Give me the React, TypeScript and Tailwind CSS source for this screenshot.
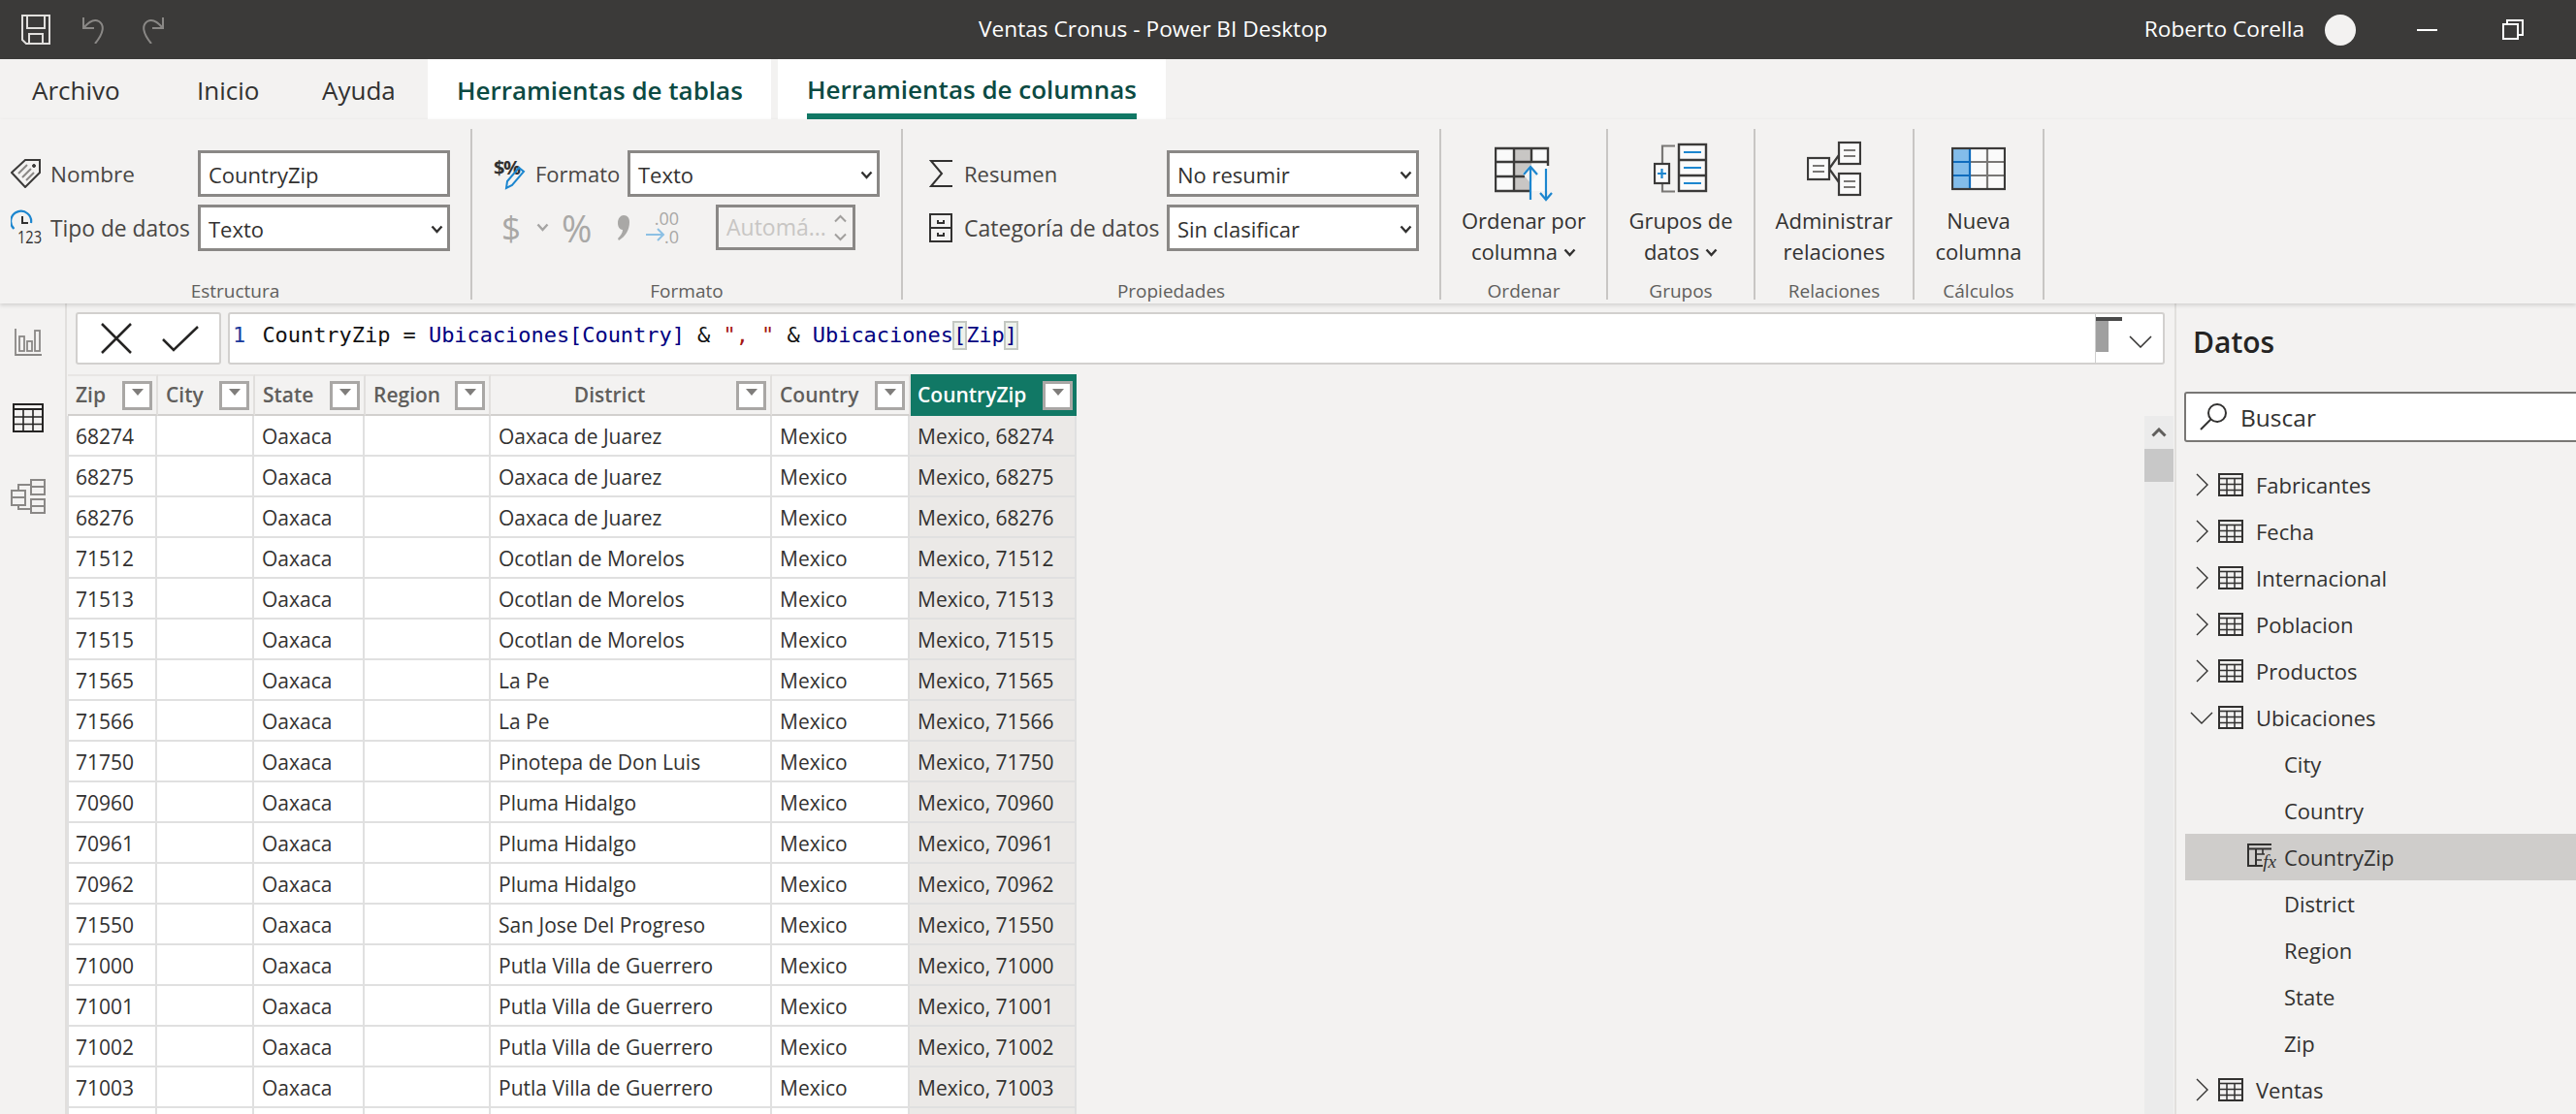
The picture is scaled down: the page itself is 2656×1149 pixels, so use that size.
type IconProps = { className?: string };

const BLUE = '#1c86cf';

const COL_WIDTHS = ['w-[91px]', 'w-[100px]', 'w-[114px]', 'w-[130px]', 'w-[290px]', 'w-[142px]', 'w-[172px]'];
const HEAD_WIDTHS = ['w-[93px]', 'w-[100px]', 'w-[114px]', 'w-[129px]', 'w-[290px]', 'w-[143px]', 'w-[171px]'];
const HEADERS = ['Zip', 'City', 'State', 'Region', 'District', 'Country', 'CountryZip'];

const ROWS: [string, string][] = [
  ['68274', 'Oaxaca de Juarez'],
  ['68275', 'Oaxaca de Juarez'],
  ['68276', 'Oaxaca de Juarez'],
  ['71512', 'Ocotlan de Morelos'],
  ['71513', 'Ocotlan de Morelos'],
  ['71515', 'Ocotlan de Morelos'],
  ['71565', 'La Pe'],
  ['71566', 'La Pe'],
  ['71750', 'Pinotepa de Don Luis'],
  ['70960', 'Pluma Hidalgo'],
  ['70961', 'Pluma Hidalgo'],
  ['70962', 'Pluma Hidalgo'],
  ['71550', 'San Jose Del Progreso'],
  ['71000', 'Putla Villa de Guerrero'],
  ['71001', 'Putla Villa de Guerrero'],
  ['71002', 'Putla Villa de Guerrero'],
  ['71003', 'Putla Villa de Guerrero'],
];

function SmallChevron({ className = '' }: IconProps) {
  return (
    <svg className={className} width="13" height="9" viewBox="0 0 13 9" fill="none" stroke="#323130" strokeWidth="2.4">
      <path d="M1.5 1.5 6.5 7l5-5.5" />
    </svg>
  );
}

function TableIcon() {
  return (
    <svg width="26" height="24" viewBox="0 0 26 24" fill="none" stroke="#323130" className="shrink-0">
      <rect x="1" y="1" width="24" height="22" strokeWidth="2" />
      <path d="M1 5.5h24" strokeWidth="1.6" />
      <path d="M1 11.5h24M1 17.5h24M9 5.5V23M17 5.5V23" strokeWidth="1.5" />
    </svg>
  );
}

function Chevron({ open }: { open?: boolean }) {
  if (open) {
    return (
      <svg width="24" height="13" viewBox="0 0 24 13" fill="none" stroke="#323130" strokeWidth="1.4">
        <path d="M1 1l11 11L23 1" />
      </svg>
    );
  }
  return (
    <svg width="13" height="24" viewBox="0 0 13 24" fill="none" stroke="#323130" strokeWidth="1.4">
      <path d="M1 1l11 11L1 23" />
    </svg>
  );
}

function FieldSelect({ value }: { value: string }) {
  return (
    <div className="w-[260px] h-[48px] flex items-center justify-between bg-white border-[3px] border-[#8a8886] pl-[8px] pr-[4px] text-[22px] text-[#323130] shrink-0">
      <span className="pt-[2px]">{value}</span>
      <SmallChevron className="mt-[2px]" />
    </div>
  );
}

function GroupLabel({ text }: { text: string }) {
  return <div className="h-[18px] leading-[18px] text-center text-[19px] text-[#605e5c] whitespace-nowrap">{text}</div>;
}

function BigButton({ width, lines, label, caret, icon }: { width: string; lines: [string, string]; label: string; caret?: boolean; icon: React.ReactNode }) {
  return (
    <div className={`${width} h-[176px] flex flex-col items-center border-r-2 border-[#c8c6c4] shrink-0`}>
      <div className="h-[78px] shrink-0">{icon}</div>
      <div className="flex-1 text-center text-[22px] leading-[32px] text-[#323130] whitespace-nowrap">
        <div>{lines[0]}</div>
        <div className="flex items-center justify-center gap-[6px]">
          {lines[1]}
          {caret && <SmallChevron className="mt-[3px]" />}
        </div>
      </div>
      <GroupLabel text={label} />
    </div>
  );
}

function OrdenarIcon() {
  return (
    <svg width="60" height="79" viewBox="0 0 60 79" fill="none">
      <rect x="1" y="20" width="54" height="44" fill="#fafafa" />
      <rect x="20" y="20" width="18" height="44" fill="#c8c6c4" />
      <path d="M38 64H1V20h54v18M1 34h54M1 49h30M20 20v44M38 20v14" stroke="#3b3a39" strokeWidth="2.4" />
      <path d="M29 46l8-9 8 9-8 10z" fill="#f3f2f1" />
      <path d="M37 73V39M30 47l7-8 7 8" stroke={BLUE} strokeWidth="2.2" />
      <path d="M53 73V41M47 66l6 7 6-7" stroke={BLUE} strokeWidth="2.2" />
    </svg>
  );
}

function GruposIcon() {
  return (
    <svg width="56" height="79" viewBox="0 0 56 79" fill="none">
      <path d="M22 17.5H9v18M9 50v14.5h13" stroke="#797775" strokeWidth="2.2" />
      <rect x="1" y="36" width="15" height="20" fill="#fafafa" stroke="#3b3a39" strokeWidth="2.2" />
      <path d="M8.5 41v10M4 46h9" stroke={BLUE} strokeWidth="2.2" />
      <rect x="26" y="16" width="28" height="48" fill="#fafafa" stroke="#3b3a39" strokeWidth="2.4" />
      <path d="M26 32h28M26 48h28" stroke="#3b3a39" strokeWidth="2.4" />
      <path d="M31 24h18M31 40h18M31 56h18" stroke={BLUE} strokeWidth="2.2" />
    </svg>
  );
}

function RelacionesIcon() {
  return (
    <svg width="56" height="79" viewBox="0 0 56 79" fill="none">
      <rect x="1" y="30" width="22" height="22" fill="#fafafa" stroke="#3b3a39" strokeWidth="2.2" />
      <rect x="33" y="14" width="22" height="22" fill="#fafafa" stroke="#3b3a39" strokeWidth="2.2" />
      <rect x="33" y="46" width="22" height="22" fill="#fafafa" stroke="#3b3a39" strokeWidth="2.2" />
      <path d="M23 41l10-14M23 41l10 14" stroke="#3b3a39" strokeWidth="2.2" />
      <path d="M6 38h12M6 44h12M38 22h12M38 28h12M38 54h12M38 60h12" stroke="#797775" strokeWidth="2.2" />
    </svg>
  );
}

function NuevaIcon() {
  return (
    <svg width="56" height="79" viewBox="0 0 56 79" fill="none">
      <rect x="1" y="20" width="54" height="42" fill="#fafafa" />
      <rect x="1" y="20" width="18" height="42" fill="#83bdea" />
      <path d="M19 34H37M37 34H55M19 48H55M37 20v42" stroke="#797775" strokeWidth="2.2" />
      <path d="M1 34h18M1 48h18M19 20v42" stroke="#0f6cbd" strokeWidth="2.2" />
      <rect x="1" y="20" width="54" height="42" stroke="#3b3a39" strokeWidth="2.2" />
    </svg>
  );
}

function FormulaBar() {
  return (
    <div className="pt-[9px] pl-[9px] pr-[10px] flex gap-[7px] shrink-0">
      <div className="w-[150px] h-[54px] bg-white border-2 border-[#d2d0ce] rounded-[3px] flex items-center shrink-0">
        <svg className="ml-[24px]" width="32" height="32" viewBox="0 0 32 32" fill="none" stroke="#252423" strokeWidth="2.5">
          <path d="M1 1l30 30M31 1 1 31" />
        </svg>
        <svg className="ml-[31px]" width="38" height="27" viewBox="0 0 38 27" fill="none" stroke="#252423" strokeWidth="2.5">
          <path d="M1 14l11 11L37 1" />
        </svg>
      </div>
      <div className="flex-1 h-[54px] bg-white border-2 border-[#d2d0ce] rounded-[3px] flex overflow-hidden">
        <div className="flex-1 pt-[8px] pl-[3px] h-full font-['DejaVu_Sans_Mono',monospace] text-[22px] leading-[28px] tracking-[-0.05px] whitespace-pre text-[#000080]">
          <span className="text-[#1a3a9c]">1</span>
          <span className="text-[#111] ml-[4px]">{' CountryZip = '}</span>
          <span>Ubicaciones[Country]</span>
          <span className="text-[#111]">{' & '}</span>
          <span className="text-[#a31515]">{'", "'}</span>
          <span className="text-[#111]">{' & '}</span>
          <span>Ubicaciones</span>
          <span className="inline-block h-[28px] bg-[#eef2ec] outline outline-2 -outline-offset-1 outline-[#c4c8c2]">[</span>
          <span>Zip</span>
          <span className="inline-block h-[28px] bg-[#eef2ec] outline outline-2 -outline-offset-1 outline-[#c4c8c2]">]</span>
        </div>
        <div className="w-[70px] h-full border-l border-[#cfcfcf] shrink-0 flex items-start pt-[3px]">
          <div className="flex flex-col">
            <div className="w-[27px] h-[4px] bg-[#4a4a4a]" />
            <div className="w-[13px] h-[32px] bg-[#a0a0a0]" />
          </div>
          <svg className="ml-[7px] mt-[19px]" width="24" height="13" viewBox="0 0 24 13" fill="none" stroke="#323130" strokeWidth="1.5">
            <path d="M1 1l11 11L23 1" />
          </svg>
        </div>
      </div>
    </div>
  );
}

function HeaderCell({ name, index }: { name: string; index: number }) {
  const active = name === 'CountryZip';
  return (
    <div
      className={`${HEAD_WIDTHS[index]} h-full flex items-center shrink-0 pr-[4px] ${
        active ? 'bg-[#117865] text-white pl-[7px]' : 'bg-[#f3f2f1] text-[#605e5c] pl-[8px] border-r-2 border-t-2 border-b-2 border-t-[#e8e6e4] border-b-[#d2d0ce] border-r-[#e1dfdd]'
      }`}
    >
      <span className={`flex-1 text-[21px] font-semibold ${name === 'District' ? 'text-center pr-[16px]' : ''}`}>{name}</span>
      <div className="w-[31px] h-[30px] bg-white border-[3px] border-[#a9a7a5] flex justify-center pt-[5px] shrink-0">
        <div className="w-0 h-0 border-l-[6px] border-r-[6px] border-t-[7px] border-l-transparent border-r-transparent border-t-[#7f7d7b]" />
      </div>
    </div>
  );
}

function DataRow({ zip, district }: { zip?: string; district?: string }) {
  const cells = [zip, '', zip ? 'Oaxaca' : '', '', district, zip ? 'Mexico' : '', zip ? `Mexico, ${zip}` : ''];
  return (
    <div className="h-[42px] flex border-l-2 border-[#e0e0e0]">
      {cells.map((text, i) => (
        <div
          key={i}
          className={`${COL_WIDTHS[i]} h-full shrink-0 border-r-2 border-b-2 border-[#e0e0e0] flex items-center pt-[3px] text-[21px] text-[#323130] whitespace-nowrap ${
            i === 0 ? 'pl-[7px]' : 'pl-[8px]'
          } ${i === 6 ? 'bg-[#ebe9e7]' : 'bg-white'}`}
        >
          {text}
        </div>
      ))}
    </div>
  );
}

function TreeTable({ name, open }: { name: string; open?: boolean }) {
  return (
    <div className="h-[48px] ml-[9px] flex items-center text-[22px] text-[#323130]">
      <div className="w-[34px] flex justify-center">
        <Chevron open={open} />
      </div>
      <TableIcon />
      <span className="ml-[13px]">{name}</span>
    </div>
  );
}

function TreeField({ name, selected }: { name: string; selected?: boolean }) {
  return (
    <div className={`h-[48px] ml-[9px] flex items-center text-[22px] text-[#323130] ${selected ? 'bg-[#cfcdcb]' : ''}`}>
      <div className="w-[102px] flex justify-end pr-[8px] shrink-0">
        {selected && (
          <div className="relative w-[30px] h-[28px]">
            <svg width="26" height="24" viewBox="0 0 26 24" fill="none" stroke="#323130">
              <path d="M25 1H1v22h15M1 5.5h24M9 5.5V23" strokeWidth="2" />
              <path d="M9 11h9M9 17h6M16 5.5V11" strokeWidth="1.6" />
            </svg>
            <span className="absolute right-0 bottom-0 font-['Liberation_Serif',serif] italic text-[19px] leading-[18px]">fx</span>
          </div>
        )}
      </div>
      <span>{name}</span>
    </div>
  );
}

export default function App() {
  return (
    <div className="w-[2656px] h-[1149px] overflow-hidden flex flex-col bg-[#f3f2f1] font-['Open_Sans',sans-serif]">
      {/* barra de titulo */}
      <div className="h-[61px] bg-[#3b3a39] flex items-center shrink-0 text-white">
        <svg className="ml-[22px]" width="30" height="31" viewBox="0 0 30 31" fill="none" stroke="#e1dfdd" strokeWidth="2">
          <path d="M1 1h28v29H5l-4-4z" />
          <path d="M6 1v13h18V1M8 30V20h14v10" />
        </svg>
        <svg className="ml-[32px]" width="26" height="29" viewBox="0 0 26 29" fill="none" stroke="#8a8886" strokeWidth="2">
          <path d="M2 2v11h11M2 13C7 7 13 3 18 6c6 4 5 12-4 23" />
        </svg>
        <svg className="ml-[34px]" width="26" height="29" viewBox="0 0 26 29" fill="none" stroke="#8a8886" strokeWidth="2">
          <path d="M24 2v11H13M24 13C19 7 13 3 8 6c-6 4-5 12 4 23" />
        </svg>
        <span className="ml-[839px] text-[22.7px] whitespace-nowrap">Ventas Cronus - Power BI Desktop</span>
        <span className="ml-auto text-[22.7px] whitespace-nowrap">Roberto Corella</span>
        <div className="ml-[21px] w-[32px] h-[32px] rounded-full bg-[#f3f2f1]" />
        <div className="ml-[63px] w-[21px] h-[2px] bg-white" />
        <svg className="ml-[67px] mr-[54px]" width="22" height="21" viewBox="0 0 22 21" fill="none" stroke="#fff" strokeWidth="2">
          <rect x="1" y="5" width="15" height="15" />
          <path d="M5 5V1h16v15h-5" />
        </svg>
      </div>

      {/* pestañas */}
      <div className="h-[62px] flex shrink-0 text-[26px] text-[#323130]">
        <div className="w-[203px] pl-[33px] pt-[2px] flex items-center">Archivo</div>
        <div className="w-[129px] pt-[2px] flex items-center">Inicio</div>
        <div className="w-[109px] pt-[2px] flex items-center">Ayuda</div>
        <div className="w-[354px] pl-[30px] pt-[2px] bg-white flex items-center font-semibold text-[#0b4a42] whitespace-nowrap">Herramientas de tablas</div>
        <div className="w-[400px] ml-[7px] pl-[30px] bg-white flex font-semibold text-[#0b4a42] whitespace-nowrap">
          <div className="h-full pt-[6px] flex items-center border-b-[6px] border-[#117865]">Herramientas de columnas</div>
        </div>
      </div>

      {/* cinta */}
      <div className="h-[190px] pt-[10px] flex shrink-0 relative z-10 bg-[#f3f2f1] shadow-[0_2px_4px_rgba(0,0,0,0.14)] text-[22px] text-[#484644]">
        <div className="w-[487px] h-[176px] flex flex-col border-r-2 border-[#c8c6c4] shrink-0">
          <div className="flex-1 pt-[22px] flex flex-col gap-[8px] pl-[11px]">
            <div className="h-[48px] flex items-center">
              <svg className="w-[41px] shrink-0" width="41" height="30" viewBox="0 0 41 30" fill="none" stroke="#3b3a39">
                <path d="M1 14 15 1h15v13L15 29z" strokeWidth="2" />
                <circle cx="24" cy="7" r="1.5" fill="#3b3a39" />
                <path d="M8 15l9-9M12 19l9-9M16 22l8-8" stroke="#8a8886" strokeWidth="2" />
              </svg>
              <span className="w-[152px] pt-[1px] shrink-0 text-[22.5px]">Nombre</span>
              <div className="w-[260px] h-[48px] flex items-center bg-white border-[3px] border-[#8a8886] pl-[8px] pt-[2px] text-[#323130]">CountryZip</div>
            </div>
            <div className="h-[48px] flex items-center">
              <svg className="w-[41px] shrink-0" width="41" height="40" viewBox="0 0 41 40" fill="none">
                <path d="M3.5 21A10.5 10.5 0 1 1 21 15" stroke={BLUE} strokeWidth="2.2" />
                <path d="M12 8v7h6" stroke="#323130" strokeWidth="2" />
                <text x="7" y="36" fontSize="18" textLength="25" lengthAdjust="spacingAndGlyphs" fill="#323130" fontFamily="Open Sans">123</text>
              </svg>
              <span className="w-[152px] pt-[3px] shrink-0 whitespace-nowrap text-[22.8px]">Tipo de datos</span>
              <FieldSelect value="Texto" />
            </div>
          </div>
          <GroupLabel text="Estructura" />
        </div>

        <div className="w-[444px] h-[176px] flex flex-col border-r-2 border-[#c8c6c4] shrink-0">
          <div className="flex-1 pt-[22px] flex flex-col gap-[8px] pl-[22px]">
            <div className="flex items-center">
              <div className="relative w-[43px] h-[32px] shrink-0">
                <span className="absolute left-0 -top-[5px] text-[20px] font-bold text-[#323130] tracking-[-1.5px]">$%</span>
                <svg className="absolute left-[11px] top-[7px]" width="22" height="26" viewBox="0 0 22 26" fill="none" stroke={BLUE} strokeWidth="2">
                  <path d="M3 17 15 3l5 4L8 21l-6 3z" />
                </svg>
              </div>
              <span className="w-[95px] shrink-0">Formato</span>
              <FieldSelect value="Texto" />
            </div>
            <div className="flex items-center h-[47px] text-[#a9a8a6]">
              <span className="ml-[8px] w-[20px] shrink-0 text-[35px] leading-none">$</span>
              <SmallChevron className="ml-[16px] opacity-40 shrink-0" />
              <span className="ml-[13px] w-[32px] shrink-0 text-[38px] leading-none">%</span>
              <svg className="ml-[25px] shrink-0" width="14" height="28" viewBox="0 0 14 28" fill="#a9a8a6">
                <path d="M7 1c4 0 6 3 6 7 0 8-4 15-11 19l-1-2c3-3 5-6 5-9-3 0-5-3-5-7 0-5 3-8 6-8z" />
              </svg>
              <div className="relative ml-[16px] w-[34px] h-[38px] text-[18px] leading-[19px] text-right shrink-0">
                <div>.00</div>
                <div>.0</div>
                <svg className="absolute left-0 top-[19px]" width="20" height="14" viewBox="0 0 20 14" fill="none" stroke="#8cc0e4" strokeWidth="2">
                  <path d="M0 7h18M12 1l6 6-6 6" />
                </svg>
              </div>
              <div className="ml-[38px] w-[144px] h-[47px] border-[3px] border-[#8a8886] flex items-center pl-[8px] pr-[6px] justify-between text-[23px] text-[#c8c6c4] shrink-0">
                <span className="whitespace-nowrap">Automá...</span>
                <div className="flex flex-col gap-[10px] shrink-0">
                  <svg width="13" height="9" viewBox="0 0 13 9" fill="none" stroke="#a19f9d" strokeWidth="2"><path d="M1 7.5 6.5 2 12 7.5" /></svg>
                  <svg width="13" height="9" viewBox="0 0 13 9" fill="none" stroke="#a19f9d" strokeWidth="2"><path d="M1 1.5 6.5 7 12 1.5" /></svg>
                </div>
              </div>
            </div>
          </div>
          <GroupLabel text="Formato" />
        </div>

        <div className="w-[555px] h-[176px] flex flex-col border-r-2 border-[#c8c6c4] shrink-0">
          <div className="flex-1 pt-[22px] flex flex-col gap-[8px] pl-[27px]">
            <div className="flex items-center">
              <svg className="w-[36px] shrink-0" width="36" height="30" viewBox="0 0 36 30" fill="none" stroke="#323130" strokeWidth="2">
                <path d="M24 2H2l11 13L2 28h22" />
              </svg>
              <span className="w-[209px] shrink-0">Resumen</span>
              <FieldSelect value="No resumir" />
            </div>
            <div className="flex items-center">
              <svg className="w-[36px] shrink-0" width="36" height="30" viewBox="0 0 36 30" fill="none" stroke="#323130" strokeWidth="2">
                <rect x="1" y="1" width="22" height="28" />
                <path d="M1 15h22M9 7v3h6V7M9 20v3h6v-3" />
              </svg>
              <span className="w-[209px] pt-[1px] shrink-0 whitespace-nowrap text-[23px]">Categoría de datos</span>
              <FieldSelect value="Sin clasificar" />
            </div>
          </div>
          <GroupLabel text="Propiedades" />
        </div>

        <BigButton width="w-[172px]" lines={['Ordenar por', 'columna']} caret label="Ordenar" icon={<OrdenarIcon />} />
        <BigButton width="w-[152px]" lines={['Grupos de', 'datos']} caret label="Grupos" icon={<GruposIcon />} />
        <BigButton width="w-[164px]" lines={['Administrar', 'relaciones']} label="Relaciones" icon={<RelacionesIcon />} />
        <BigButton width="w-[134px]" lines={['Nueva', 'columna']} label="Cálculos" icon={<NuevaIcon />} />
      </div>

      {/* cuerpo */}
      <div className="flex-1 flex min-h-0">
        <div className="w-[69px] border-r-2 border-[#e1dfdd] shrink-0 flex flex-col items-start">
          <svg className="mt-[26px] ml-[15px]" width="28" height="28" viewBox="0 0 28 28" fill="none" stroke="#8a8886" strokeWidth="1.8">
            <path d="M1 0v27h27" />
            <rect x="5" y="8" width="5" height="15" />
            <rect x="13" y="13" width="5" height="10" />
            <rect x="21" y="2" width="5" height="21" />
          </svg>
          <svg className="mt-[49px] ml-[13px]" width="32" height="30" viewBox="0 0 32 30" fill="none" stroke="#252423">
            <rect x="1" y="1" width="30" height="28" strokeWidth="2" />
            <path d="M1 6h30" strokeWidth="2" />
            <path d="M1 14h30M1 21.5h30M11 6v23M21 6v23" strokeWidth="1.6" />
          </svg>
          <svg className="mt-[48px] ml-[11px]" width="36" height="36" viewBox="0 0 36 36" fill="none" stroke="#8a8886" strokeWidth="2">
            <rect x="1" y="12" width="14" height="15" />
            <rect x="21" y="1" width="14" height="15" />
            <rect x="21" y="21" width="14" height="14" />
            <path d="M8 12V6h13M8 27v4h13M1 19h14M21 8h14M21 28h14" />
          </svg>
        </div>

        <div className="w-[2173px] shrink-0 flex flex-col min-h-0">
          <FormulaBar />
          <div className="mt-[10px] h-[43px] flex ml-[1px] shrink-0">
            {HEADERS.map((h, i) => (
              <HeaderCell key={h} name={h} index={i} />
            ))}
          </div>
          <div className="flex-1 flex min-h-0">
            <div className="flex-1 overflow-hidden">
              {ROWS.map(([zip, district]) => (
                <DataRow key={zip} zip={zip} district={district} />
              ))}
              <DataRow />
            </div>
            <div className="w-[30px] mr-[1px] bg-[#ebebeb] shrink-0 flex flex-col">
              <div className="h-[34px] flex items-center justify-center">
                <svg width="16" height="10" viewBox="0 0 16 10" fill="none" stroke="#605e5c" strokeWidth="3">
                  <path d="M1.5 8.5 8 2l6.5 6.5" />
                </svg>
              </div>
              <div className="h-[34px] bg-[#c8c8c8]" />
            </div>
          </div>
        </div>

        <div className="w-[414px] border-l-2 border-[#e1dfdd] shrink-0 overflow-hidden">
          <div className="h-[78px] pl-[17px] flex items-center text-[30px] font-semibold text-[#252423]">Datos</div>
          <div className="mt-[13px] ml-[8px] w-[440px] h-[52px] bg-white border-2 border-[#797775] rounded-[3px] flex items-center pl-[14px] text-[24.5px] text-[#323130]">
            <svg width="28" height="28" viewBox="0 0 28 28" fill="none" stroke="#323130" strokeWidth="2">
              <circle cx="18" cy="10" r="9" />
              <path d="M11.5 16.5 1 27" />
            </svg>
            <span className="ml-[14px] pt-[3px]">Buscar</span>
          </div>
          <div className="mt-[20px]">
            <TreeTable name="Fabricantes" />
            <TreeTable name="Fecha" />
            <TreeTable name="Internacional" />
            <TreeTable name="Poblacion" />
            <TreeTable name="Productos" />
            <TreeTable name="Ubicaciones" open />
            <TreeField name="City" />
            <TreeField name="Country" />
            <TreeField name="CountryZip" selected />
            <TreeField name="District" />
            <TreeField name="Region" />
            <TreeField name="State" />
            <TreeField name="Zip" />
            <TreeTable name="Ventas" />
          </div>
        </div>
      </div>
    </div>
  );
}
